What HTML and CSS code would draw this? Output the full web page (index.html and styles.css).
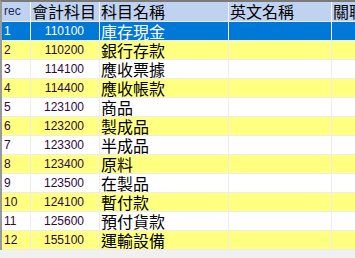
FILE: index.html
```html
<!DOCTYPE html>
<html lang="zh-Hant">
<head>
  <meta charset="UTF-8" />
  <title>會計科目</title>
  <link rel="stylesheet" href="styles.css">
</head>
<body>
  <div class="grid">
    <div class="row head">
      <div class="cell rec">rec</div>
      <div class="cell cjk">會計科目</div>
      <div class="cell cjk">科目名稱</div>
      <div class="cell cjk">英文名稱</div>
      <div class="cell cjk">關聯</div>
    </div>
    <div class="row sel">
      <div class="cell num-l">1</div>
      <div class="cell num">110100</div>
      <div class="cell cjk">庫存現金</div>
      <div class="cell"></div>
      <div class="cell"></div>
    </div>
    <div class="row odd">
      <div class="cell num-l">2</div>
      <div class="cell num">110200</div>
      <div class="cell cjk">銀行存款</div>
      <div class="cell"></div>
      <div class="cell"></div>
    </div>
    <div class="row">
      <div class="cell num-l">3</div>
      <div class="cell num">114100</div>
      <div class="cell cjk">應收票據</div>
      <div class="cell"></div>
      <div class="cell"></div>
    </div>
    <div class="row odd">
      <div class="cell num-l">4</div>
      <div class="cell num">114400</div>
      <div class="cell cjk">應收帳款</div>
      <div class="cell"></div>
      <div class="cell"></div>
    </div>
    <div class="row">
      <div class="cell num-l">5</div>
      <div class="cell num">123100</div>
      <div class="cell cjk">商品</div>
      <div class="cell"></div>
      <div class="cell"></div>
    </div>
    <div class="row odd">
      <div class="cell num-l">6</div>
      <div class="cell num">123200</div>
      <div class="cell cjk">製成品</div>
      <div class="cell"></div>
      <div class="cell"></div>
    </div>
    <div class="row">
      <div class="cell num-l">7</div>
      <div class="cell num">123300</div>
      <div class="cell cjk">半成品</div>
      <div class="cell"></div>
      <div class="cell"></div>
    </div>
    <div class="row odd">
      <div class="cell num-l">8</div>
      <div class="cell num">123400</div>
      <div class="cell cjk">原料</div>
      <div class="cell"></div>
      <div class="cell"></div>
    </div>
    <div class="row">
      <div class="cell num-l">9</div>
      <div class="cell num">123500</div>
      <div class="cell cjk">在製品</div>
      <div class="cell"></div>
      <div class="cell"></div>
    </div>
    <div class="row odd">
      <div class="cell num-l">10</div>
      <div class="cell num">124100</div>
      <div class="cell cjk">暫付款</div>
      <div class="cell"></div>
      <div class="cell"></div>
    </div>
    <div class="row">
      <div class="cell num-l">11</div>
      <div class="cell num">125600</div>
      <div class="cell cjk">預付貨款</div>
      <div class="cell"></div>
      <div class="cell"></div>
    </div>
    <div class="row odd">
      <div class="cell num-l">12</div>
      <div class="cell num">155100</div>
      <div class="cell cjk">運輸設備</div>
      <div class="cell"></div>
      <div class="cell"></div>
    </div>
  </div>
</body>
</html>
```
FILE: styles.css
```css
body {
  margin: 0;
  height: 258px;
  overflow: hidden;
  background: #f0f0f0;
  font-family: "Liberation Sans", Arial, sans-serif;
}
.grid {
  border-top: 2px solid #7a7a7a;
  border-left: 2px solid #9a9a9a;
  display: flex;
  flex-direction: column;
  gap: 1px;
  padding-bottom: 1px;
  background: #ececec;
  overflow: hidden;
}
.row {
  display: grid;
  grid-template-columns: 28px 68px 128px 102px 40px;
  column-gap: 1px;
  height: 18px;
  background: #ececec;
}
.cell {
  background: #ffffff;
  color: #2e0840;
  font-size: 12px;
  line-height: 18px;
  white-space: nowrap;
  overflow: hidden;
}
.head {
  height: 19px;
  background: #f4f6fa;
}
.head .cell {
  background: #bfd3f1;
  color: #000;
  line-height: 19px;
}
.head .rec {
  color: #1c2a50;
  padding-left: 2px;
  font-size: 12px;
}
.cjk {
  font-family: "Noto Sans CJK TC", "Noto Sans CJK SC", sans-serif;
  font-size: 16px;
  padding-left: 1px;
  color: #000;
}
.num {
  text-align: right;
  padding-right: 15px;
}
.num-l {
  padding-left: 2px;
}
.odd .cell {
  background: #ffff80;
}
.sel {
  background: #f4f6fa;
}
.sel .cell {
  background: #0078d7;
  color: #ffffff;
}
```
